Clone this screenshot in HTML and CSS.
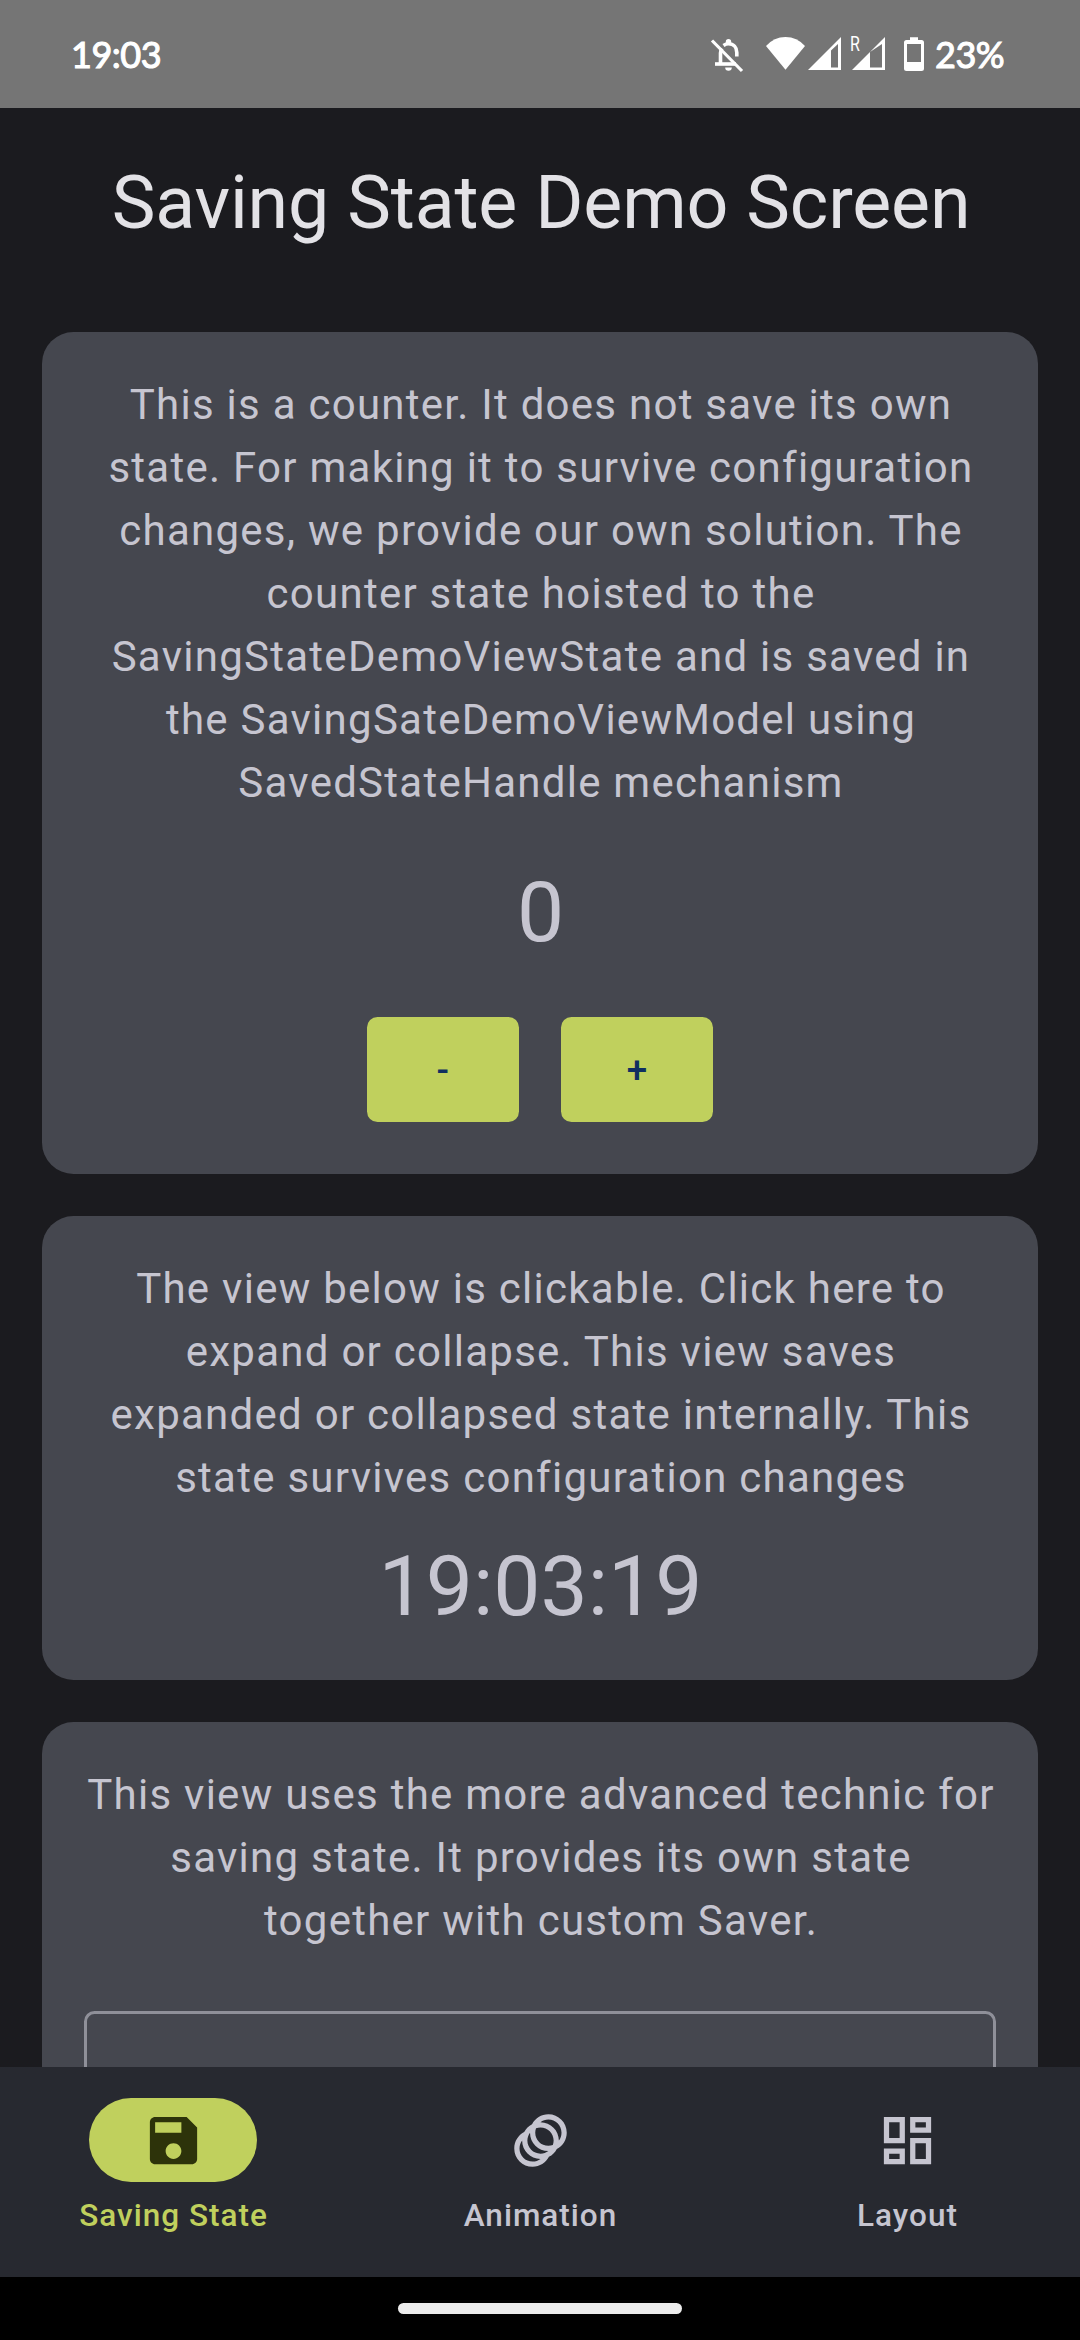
FILE: index.html
```html
<!DOCTYPE html>
<html lang="en">
<head>
<meta charset="utf-8">
<title>Saving State Demo</title>
<link rel="stylesheet" href="styles.css">
</head>
<body>
<div class="screen">
  <div class="status-bar">
    <span class="clock">19:03</span>
    <div class="status-right">
      <svg class="icon-bell" width="36" height="40" viewBox="709 35 36 40" fill="none" stroke="#fff">
        <path d="M712 40.500L742 71" stroke-width="3.200"/>
        <path d="M715 64H736" stroke-width="3.600"/>
        <path d="M720.500 64V53Q720.500 50.500 722 48.500" stroke-width="3.600"/>
        <path d="M723.500 45.500Q726 43.800 728.500 43.800C733.500 43.800 736.800 47.500 736.800 52.500V56.500" stroke-width="3.600"/>
        <path d="M725.800 44V41.700a2.700 2.700 0 0 1 5.400 0V44zM725.200 67.500h6.600a3.300 3.300 0 0 1-6.600 0z" fill="#fff" stroke="none"/>
      </svg>
      <svg class="icon-signals" width="122" height="40" viewBox="764 35 122 40" fill="#fff">
        <path d="M785.500 69.800L766 46Q774 37 785.500 37T805 46z"/>
        <path fill-rule="evenodd" d="M808 70L841 37V70zM831 50.500L838 44V67.500H831z"/>
        <path fill-rule="evenodd" d="M852 70L885 37V70zM870 52L882 44V67.500H870z"/>
        <text class="roaming" transform="translate(850 51) scale(.8 1)">R</text>
      </svg>
      <svg class="icon-battery" width="20" height="36" viewBox="904 36 20 36" fill="#fff">
        <path fill-rule="evenodd" d="M910 40V37.300H918V40H921.500Q924 40 924 42.500V68.500Q924 71 921.500 71H906.500Q904 71 904 68.500V42.500Q904 40 906.500 40zM907 44V62H921V44z"/>
      </svg>
      <span class="battery-level">23%</span>
    </div>
  </div>

  <main class="content">
    <h1 class="title">Saving State Demo Screen</h1>

    <section class="card counter-card">
      <p class="body-text">This is a counter. It does not save its own state. For making it to survive configuration changes, we provide our own solution. The counter state hoisted to the SavingStateDemoViewState and is saved in the SavingSateDemoViewModel using SavedStateHandle mechanism</p>
      <div class="display count">0</div>
      <div class="buttons">
        <button class="button" type="button">-</button>
        <button class="button" type="button">+</button>
      </div>
    </section>

    <section class="card clock-card">
      <p class="body-text">The view below is clickable. Click here to expand or collapse. This view saves expanded or collapsed state internally. This state survives configuration changes</p>
      <div class="display time">19:03:19</div>
    </section>

    <section class="card saver-card">
      <p class="body-text">This view uses the more advanced technic for saving state. It provides its own state together with custom Saver.</p>
      <div class="field"></div>
    </section>
  </main>

  <nav class="nav">
    <div class="nav-item active">
      <div class="pill">
        <svg class="nav-icon" viewBox="0 0 24 24"><path fill-rule="evenodd" d="M17 3H5c-1.110 0-2 .9-2 2v14c0 1.100.89 2 2 2h14c1.100 0 2-.9 2-2V7l-4-4zm-5 16c-1.660 0-3-1.340-3-3s1.340-3 3-3 3 1.340 3 3-1.340 3-3 3zm3-10H5V5h10v4z"/></svg>
      </div>
      <span class="nav-label">Saving State</span>
    </div>
    <div class="nav-item">
      <div class="pill">
        <svg class="nav-icon" viewBox="0 0 24 24"><path d="M15 2c-2.710 0-5.050 1.540-6.220 3.780-1.280.67-2.340 1.720-3 3C3.540 9.950 2 12.290 2 15c0 3.870 3.130 7 7 7 2.710 0 5.050-1.540 6.220-3.780 1.280-.67 2.340-1.720 3-3C20.460 14.050 22 11.710 22 9c0-3.870-3.130-7-7-7zM9 20c-2.760 0-5-2.240-5-5 0-1.120.37-2.160 1-3 0 3.870 3.130 7 7 7-.84.63-1.880 1-3 1zm3-3c-2.760 0-5-2.240-5-5 0-1.120.37-2.160 1-3 0 3.860 3.130 6.990 7 7-.84.63-1.880 1-3 1zm4.700-3.300c-.53.19-1.100.3-1.700.3-2.760 0-5-2.240-5-5 0-.6.11-1.170.3-1.700.53-.19 1.100-.3 1.700-.3 2.760 0 5 2.240 5 5 0 .6-.11 1.170-.3 1.700zM19 12c0-3.860-3.130-6.990-7-7 .84-.63 1.870-1 3-1 2.760 0 5 2.240 5 5 0 1.120-.37 2.160-1 3z"/></svg>
      </div>
      <span class="nav-label">Animation</span>
    </div>
    <div class="nav-item">
      <div class="pill">
        <svg class="nav-icon" viewBox="0 0 24 24"><path d="M19 5v2h-4V5h4M9 5v6H5V5h4m10 8v6h-4v-6h4M9 17v2H5v-2h4M21 3h-8v6h8V3zM11 3H3v10h8V3zm10 8h-8v10h8V11zm-10 4H3v6h8v-6z"/></svg>
      </div>
      <span class="nav-label">Layout</span>
    </div>
  </nav>

  <div class="gesture-bar"><div class="handle"></div></div>
</div>
</body>
</html>
```
FILE: styles.css
```css
* { box-sizing: border-box; }

body {
  margin: 0;
  background: #1b1b1f;
  font-family: Roboto, sans-serif;
}

.screen {
  display: flex;
  flex-direction: column;
  width: 1080px;
  height: 2340px;
  overflow: hidden;
}

.status-bar {
  flex: none;
  display: flex;
  justify-content: space-between;
  height: 108px;
  padding: 0 74px 0 71px;
  background: #757575;
  color: #fff;
  font-family: Lato, sans-serif;
  font-weight: 400;
  font-size: 36px;
  line-height: 108px;
  -webkit-text-stroke: 1.1px #fff;
}

.clock { letter-spacing: -0.5px; }

.status-right {
  display: flex;
  align-items: flex-start;
}

.icon-bell { margin: 35px 19px 0 0; }
.icon-signals { margin: 35px 18px 0 0; overflow: visible; }
.icon-battery { margin: 36px 11px 0 0; }

.roaming {
  font: 400 20px Roboto, sans-serif;
  -webkit-text-stroke: 0;
}

.battery-level { width: 71px; white-space: nowrap; letter-spacing: -0.5px; }

.content {
  flex: 1;
  min-height: 0;
  overflow: hidden;
  display: flex;
  flex-direction: column;
  gap: 42px;
  padding: 48px 42px 0;
}

.title {
  flex: none;
  height: 134px;
  margin: 0;
  padding-left: 2px;
  color: #e3e2e6;
  font-size: 73.5px;
  font-weight: 400;
  line-height: 95px;
  letter-spacing: -0.15px;
  text-align: center;
}

.card {
  flex: none;
  padding: 41px 42px 42px;
  border-radius: 31.5px;
  background: #45474f;
  color: #c6c5d0;
}

.counter-card { height: 842px; }
.clock-card { height: 464px; }
.saver-card { height: 600px; }

.body-text {
  margin: 0;
  padding-left: 2px;
  font-size: 42px;
  line-height: 63px;
  letter-spacing: 1.26px;
  text-align: center;
}

.display {
  padding-left: 1px;
  font-size: 84px;
  line-height: 105px;
  text-align: center;
}

.count { margin-top: 46px; }
.time { margin-top: 25px; }

.buttons {
  display: flex;
  justify-content: center;
  gap: 42px;
  margin-top: 52px;
}

.button {
  width: 152px;
  height: 105px;
  padding: 3px 0 0;
  border: 0;
  border-radius: 10.5px;
  background: #c0d05d;
  color: #102f60;
  font: 500 36.75px/52px Roboto, sans-serif;
  letter-spacing: 0.2625px;
}

.field {
  height: 147px;
  margin-top: 59px;
  border: 3px solid #8f9099;
  border-radius: 10.5px;
}

.nav {
  flex: none;
  display: grid;
  grid-template-columns: repeat(3, 1fr);
  gap: 21px;
  height: 210px;
  padding-top: 31px;
  background: #272930;
  color: #c6c5d0;
}

.nav-item {
  display: flex;
  flex-direction: column;
  align-items: center;
  gap: 13px;
}

.pill {
  display: flex;
  align-items: center;
  justify-content: center;
  width: 168px;
  height: 84px;
  border-radius: 42px;
}

.nav-icon {
  width: 63px;
  height: 63px;
  fill: currentColor;
}

.nav-label {
  padding-left: 1px;
  font-size: 31.5px;
  font-weight: 500;
  line-height: 42px;
  letter-spacing: 1px;
}

.active { color: #c0d05d; }
.active .pill { background: #c0d05d; color: #2d330a; }

.gesture-bar {
  flex: none;
  display: flex;
  justify-content: center;
  height: 63px;
  padding-top: 26px;
  background: #000;
}

.handle {
  width: 284px;
  height: 11px;
  border-radius: 6px;
  background: #ececec;
}
```
